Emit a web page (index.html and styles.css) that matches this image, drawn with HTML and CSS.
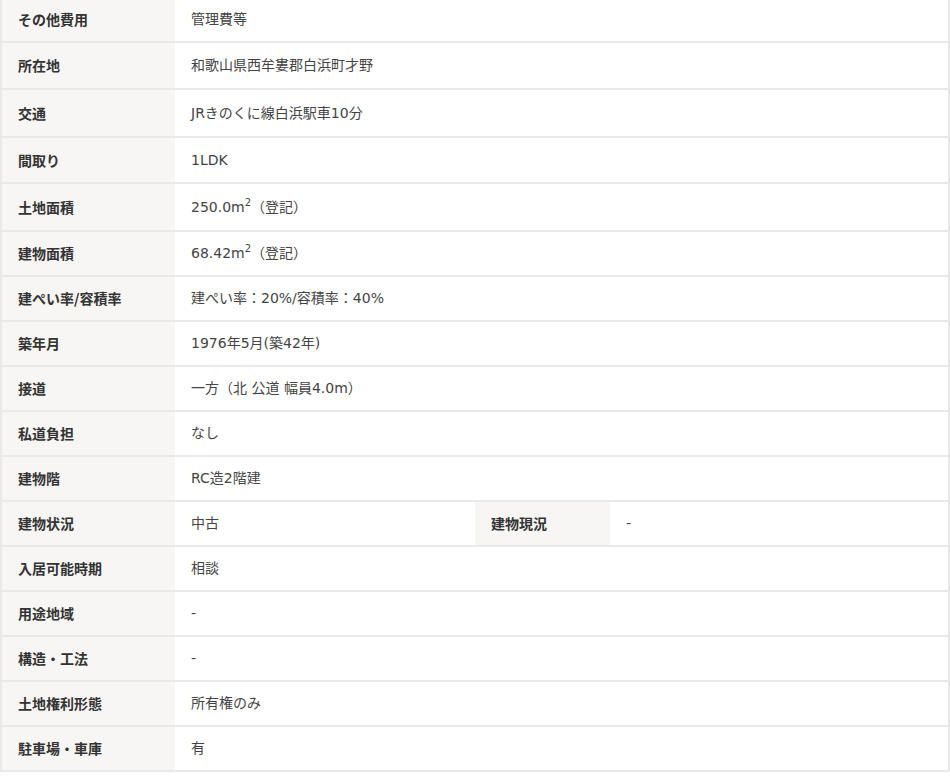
FILE: index.html
```html
<html>
<head>
    <title>物件概要</title>
    <meta charset="UTF-8" />
    <link rel="stylesheet" href="styles.css">
</head>
<body>
<table class="spec">
    <colgroup>
        <col class="c_head">
        <col class="c_data">
        <col class="c_head2">
        <col>
    </colgroup>
    <tbody>
    <tr><th>その他費用</th><td colspan="3">管理費等</td></tr>
    <tr class="mid"><th>所在地</th><td colspan="3">和歌山県西牟婁郡白浜町才野</td></tr>
    <tr class="tall"><th>交通</th><td colspan="3">JRきのくに線白浜駅車10分</td></tr>
    <tr class="mid"><th>間取り</th><td colspan="3">1LDK</td></tr>
    <tr class="tall"><th>土地面積</th><td colspan="3">250.0m<sup>2</sup>（登記）</td></tr>
    <tr><th>建物面積</th><td colspan="3">68.42m<sup>2</sup>（登記）</td></tr>
    <tr><th>建ぺい率/容積率</th><td colspan="3">建ぺい率：20%/容積率：40%</td></tr>
    <tr><th>築年月</th><td colspan="3">1976年5月(築42年)</td></tr>
    <tr><th>接道</th><td colspan="3">一方（北 公道 幅員4.0m）</td></tr>
    <tr><th>私道負担</th><td colspan="3">なし</td></tr>
    <tr><th>建物階</th><td colspan="3">RC造2階建</td></tr>
    <tr><th>建物状況</th><td>中古</td><th>建物現況</th><td>-</td></tr>
    <tr><th>入居可能時期</th><td colspan="3">相談</td></tr>
    <tr><th>用途地域</th><td colspan="3">-</td></tr>
    <tr><th>構造・工法</th><td colspan="3">-</td></tr>
    <tr><th>土地権利形態</th><td colspan="3">所有権のみ</td></tr>
    <tr><th>駐車場・車庫</th><td colspan="3">有</td></tr>
    </tbody>
</table>
</body>
</html>
```

FILE: styles.css
```css
body {
    margin: 0;
    background-color: #fff;
    font-family: "Noto Sans CJK JP", sans-serif;
    color: #333;
}

.spec {
    width: 950px;
    margin-top: -4px;
    table-layout: fixed;
    border-collapse: collapse;
    border: 2px solid #e9e9e9;
    font-size: 14px;
}

.c_head {
    width: 174px;
}
.c_data {
    width: 300px;
}
.c_head2 {
    width: 135px;
}

th, td {
    border-bottom: 2px solid #e9e9e9;
    padding: 11px 16px;
    line-height: 21px;
    text-align: left;
    vertical-align: middle;
}

.mid th, .mid td {
    line-height: 22.5px;
}
.tall th, .tall td {
    line-height: 24px;
}

th {
    background-color: #f7f6f4;
    font-weight: bold;
    color: #333;
}

td {
    background-color: #fff;
    font-family: "DejaVu Sans", "Noto Sans CJK JP", sans-serif;
    font-weight: normal;
    color: #444;
}

sup {
    font-size: 10px;
    line-height: 10px;
}
```
